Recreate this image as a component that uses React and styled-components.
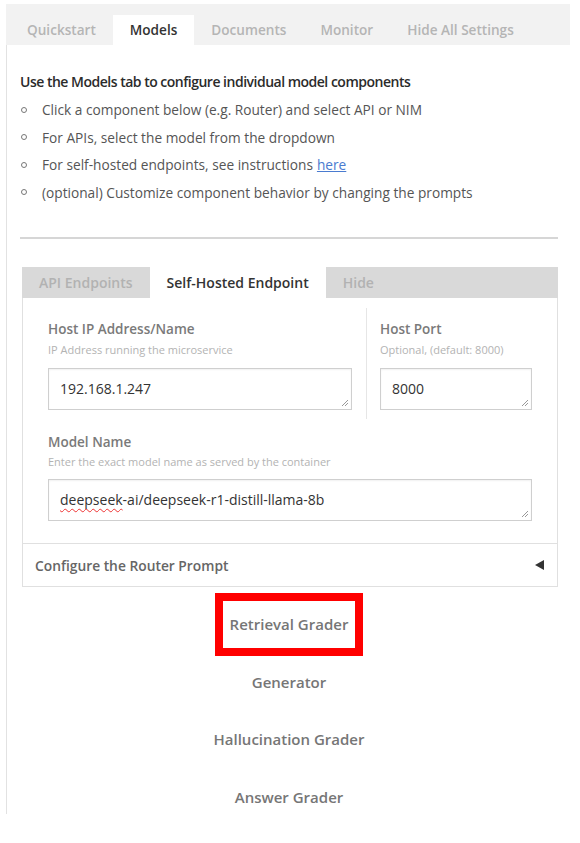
import React from "react";
import styled, { createGlobalStyle } from "styled-components";

const GlobalStyle = createGlobalStyle`
  body {
    margin: 0;
    background: #fff;
    font-family: "Open Sans", "Noto Sans", sans-serif;
  }
`;

const Page = styled.div`
  width: 564px;
  padding: 4px 0 0 6px;
`;

const TabBar = styled.div`
  display: flex;
  align-items: flex-end;
  height: 41px;
  background: #f2f2f2;
  padding-left: 4px;
`;

const Tab = styled.div`
  height: 30px;
  line-height: 30px;
  padding: 0 17px;
  font-size: 13.6px;
  font-weight: 600;
  color: ${props => (props.active ? "#333" : "#b5b5b5")};
  background: ${props => (props.active ? "#fff" : "transparent")};
`;

const Content = styled.div`
  height: 769px;
  overflow: hidden;
  border-left: 1px solid #e2e2e2;
  padding: 27px 12px 0 13px;
  box-sizing: border-box;
`;

const Heading = styled.div`
  font-size: 14px;
  font-weight: 600;
  letter-spacing: -0.5px;
  line-height: 20px;
  color: #2b2b2b;
`;

const List = styled.ul`
  list-style: none;
  margin: 4px 0 0;
  padding: 0;
`;

const Item = styled.li`
  display: flex;
  align-items: center;
  gap: 15px;
  height: 27.5px;
  font-size: 13.7px;
  color: #555;

  &::before {
    content: "";
    width: 4px;
    height: 4px;
    margin-left: 1px;
    border: 1px solid #777;
    border-radius: 50%;
  }
`;

const Link = styled.a`
  color: #4a7bd0;
  text-decoration: underline;
  margin-left: 4px;
`;

const Rule = styled.hr`
  margin: 31px 0 0;
  border: 0;
  height: 2px;
  background: #d6d6d6;
`;

const Panel = styled.div`
  margin: 28px 0 0 2px;
`;

const PanelTabs = styled.div`
  display: flex;
  height: 31px;
  background: #d9d9d9;
`;

const PanelTab = styled.div`
  line-height: 31px;
  padding: 0 17px;
  font-size: 14px;
  font-weight: 600;
  color: ${props => (props.active ? "#333" : "#b2b2b2")};
  background: ${props => (props.active ? "#fff" : "transparent")};
`;

const PanelBody = styled.div`
  border: 1px solid #e0e0e0;
  border-top: 0;
  padding: 10px 25px 22px 25px;
`;

const Row = styled.div`
  display: flex;
`;

const Column = styled.div`
  flex: ${props => (props.narrow ? "0 0 152px" : "1")};
  padding: 12px ${props => (props.narrow ? "0" : "14px")} 9px
    ${props => (props.narrow ? "13px" : "0")};
  border-left: ${props => (props.narrow ? "1px solid #e6e6e6" : "0")};
`;

const Field = styled.div`
  margin-top: ${props => props.top || 0}px;
`;

const Label = styled.div`
  font-size: 13.5px;
  font-weight: 600;
  line-height: 18px;
  color: #7a7a7a;
`;

const Hint = styled.div`
  margin-top: ${props => (props.tight ? 3 : 4)}px;
  font-size: 11px;
  line-height: 16px;
  color: #b3b3b3;
`;

const Box = styled.div`
  position: relative;
  margin-top: ${props => (props.tight ? 9 : 10)}px;
  height: 42px;
  box-sizing: border-box;
  border: 1px solid #cfcfcf;
  box-shadow: inset 0 1px 2px rgba(0, 0, 0, 0.06);
  padding: 0 11px;
  font-size: 14px;
  line-height: 40px;
  color: #333;
`;

const Grip = styled.svg`
  position: absolute;
  right: 2px;
  bottom: 2px;
`;

const Misspelled = styled.span`
  text-decoration: underline wavy #e33;
  text-decoration-thickness: 1px;
  text-underline-offset: 3px;
`;

const Accordion = styled.div`
  display: flex;
  align-items: center;
  justify-content: space-between;
  height: 42px;
  border: 1px solid #e0e0e0;
  border-top: 0;
  padding: 0 13px 0 12px;
  font-size: 13.8px;
  font-weight: 600;
  color: #666;
`;

const Arrow = styled.span`
  width: 0;
  height: 0;
  border-top: 5px solid transparent;
  border-bottom: 5px solid transparent;
  border-right: 9px solid #333;
`;

const Components = styled.div`
  margin-top: 9px;
`;

const ComponentRow = styled.div`
  display: flex;
  justify-content: center;
  align-items: center;
  height: 57.5px;
`;

const ComponentButton = styled.div`
  height: 47px;
  line-height: 47px;
  padding: 0 7px;
  font-size: 15px;
  font-weight: 600;
  color: #767676;
  outline: ${props => (props.marked ? "8px solid #ff0000" : "none")};
`;

const ResizeGrip = () => (
  <Grip width="8" height="8" viewBox="0 0 8 8">
    <path d="M7 1L1 7M7 4L4 7" stroke="#999" strokeWidth="1" />
  </Grip>
);

const steps = [
  "Click a component below (e.g. Router) and select API or NIM",
  "For APIs, select the model from the dropdown",
];

const graders = ["Retrieval Grader", "Generator", "Hallucination Grader", "Answer Grader"];

export default function App() {
  return (
    <Page>
      <GlobalStyle />
      <TabBar>
        <Tab>Quickstart</Tab>
        <Tab active>Models</Tab>
        <Tab>Documents</Tab>
        <Tab>Monitor</Tab>
        <Tab>Hide All Settings</Tab>
      </TabBar>
      <Content>
        <Heading>Use the Models tab to configure individual model components</Heading>
        <List>
          {steps.map(s => (
            <Item key={s}>{s}</Item>
          ))}
          <Item>
            <span>
              For self-hosted endpoints, see instructions
              <Link href="#">here</Link>
            </span>
          </Item>
          <Item>(optional) Customize component behavior by changing the prompts</Item>
        </List>
        <Rule />
        <Panel>
          <PanelTabs>
            <PanelTab>API Endpoints</PanelTab>
            <PanelTab active>Self-Hosted Endpoint</PanelTab>
            <PanelTab>Hide</PanelTab>
          </PanelTabs>
          <PanelBody>
            <Row>
              <Column>
                <Label>Host IP Address/Name</Label>
                <Hint>IP Address running the microservice</Hint>
                <Box>
                  192.168.1.247
                  <ResizeGrip />
                </Box>
              </Column>
              <Column narrow>
                <Label>Host Port</Label>
                <Hint>Optional, (default: 8000)</Hint>
                <Box>
                  8000
                  <ResizeGrip />
                </Box>
              </Column>
            </Row>
            <Field top={14}>
              <Label>Model Name</Label>
              <Hint tight>Enter the exact model name as served by the container</Hint>
              <Box tight>
                <Misspelled>deepseek</Misspelled>-ai/deepseek-r1-distill-llama-8b
                <ResizeGrip />
              </Box>
            </Field>
          </PanelBody>
          <Accordion>
            Configure the Router Prompt
            <Arrow />
          </Accordion>
        </Panel>
        <Components>
          {graders.map((g, i) => (
            <ComponentRow key={g}>
              <ComponentButton marked={i === 0}>{g}</ComponentButton>
            </ComponentRow>
          ))}
        </Components>
      </Content>
    </Page>
  );
}
